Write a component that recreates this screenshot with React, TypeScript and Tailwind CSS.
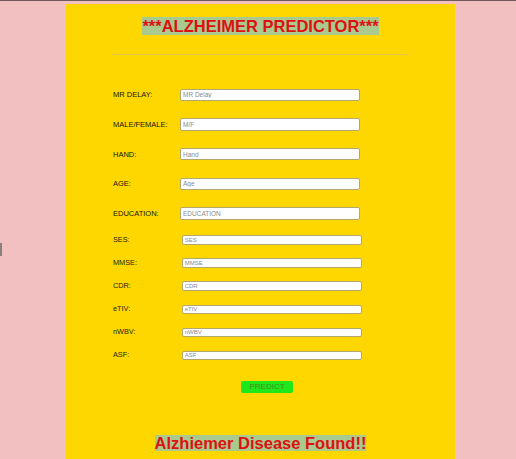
import React from 'react';

const topFields = [
  { label: 'MR DELAY:', ph: 'MR Delay' },
  { label: 'MALE/FEMALE:', ph: 'M/F' },
  { label: 'HAND:', ph: 'Hand' },
  { label: 'AGE:', ph: 'Age' },
  { label: 'EDUCATION:', ph: 'EDUCATION' },
];

const lowFields = [
  { label: 'SES:', ph: 'SES' },
  { label: 'MMSE:', ph: 'MMSE' },
  { label: 'CDR:', ph: 'CDR' },
  { label: 'eTIV:', ph: 'eTIV' },
  { label: 'nWBV:', ph: 'nWBV' },
  { label: 'ASF:', ph: 'ASF' },
];

const App = () => {
  return (
    <div className="relative min-h-screen h-[459px] overflow-hidden bg-[#f2c0c1] border-t border-[#6a5a5a] font-['Liberation_Sans',Arial,sans-serif]">
      {/* little scrollbar mark at left edge */}
      <div className="absolute left-0 top-[242px] w-[2px] h-[13px] bg-[#8a8080]" />

      <div className="ml-[66px] mt-[3px] w-[389px] h-[480px] bg-[#ffd700] px-[46px]">
        <div className="pt-[13px] text-center h-[31px] leading-[18px]">
          <span className="inline-block h-[18px] leading-[18px] text-[16.5px] font-bold text-[#dd1111] bg-[#a9c98f]">
            ***ALZHEIMER PREDICTOR***
          </span>
        </div>

        <div className="mt-[19px] border-t border-[#e3c650]" />

        <form className="mt-[25px]">
          {topFields.map((f) => (
            <div key={f.label} className="flex items-center h-[29.7px]">
              <label className="w-[68px] pl-[1px] text-[7.5px] text-[#151408]">{f.label}</label>
              <input
                placeholder={f.ph}
                className="w-[180px] h-[12.4px] bg-white border border-[#b3a66e] rounded-[2px] pl-[2px] text-[6.5px] placeholder:text-[#8a8a8a] outline-none"
              />
            </div>
          ))}
          {lowFields.map((f) => (
            <div key={f.label} className="flex items-center h-[23.1px]">
              <label className="w-[69.7px] pl-[1px] text-[7.3px] text-[#252314]">{f.label}</label>
              <input
                placeholder={f.ph}
                className="w-[180.6px] h-[9.5px] bg-white border border-[#b3a66e] rounded-[2px] pl-[2px] text-[6px] placeholder:text-[#8a8a8a] outline-none"
              />
            </div>
          ))}

          <div className="mt-[13.5px] ml-[129px]">
            <button
              type="button"
              className="block w-[52px] h-[12px] bg-[#1ee81a] rounded-[2px] text-[8px] leading-[12px] text-[#4e8a1c] text-center"
            >
              PREDICT
            </button>
          </div>
        </form>

        <div className="mt-[42px] text-center h-[16px] leading-[16px]">
          <span className="inline-block h-[16px] leading-[16px] text-[16.5px] font-bold text-[#dd1111] bg-[#a9c98f]">
            Alzhiemer Disease Found!!
          </span>
        </div>
      </div>
    </div>
  );
};

export default App;
